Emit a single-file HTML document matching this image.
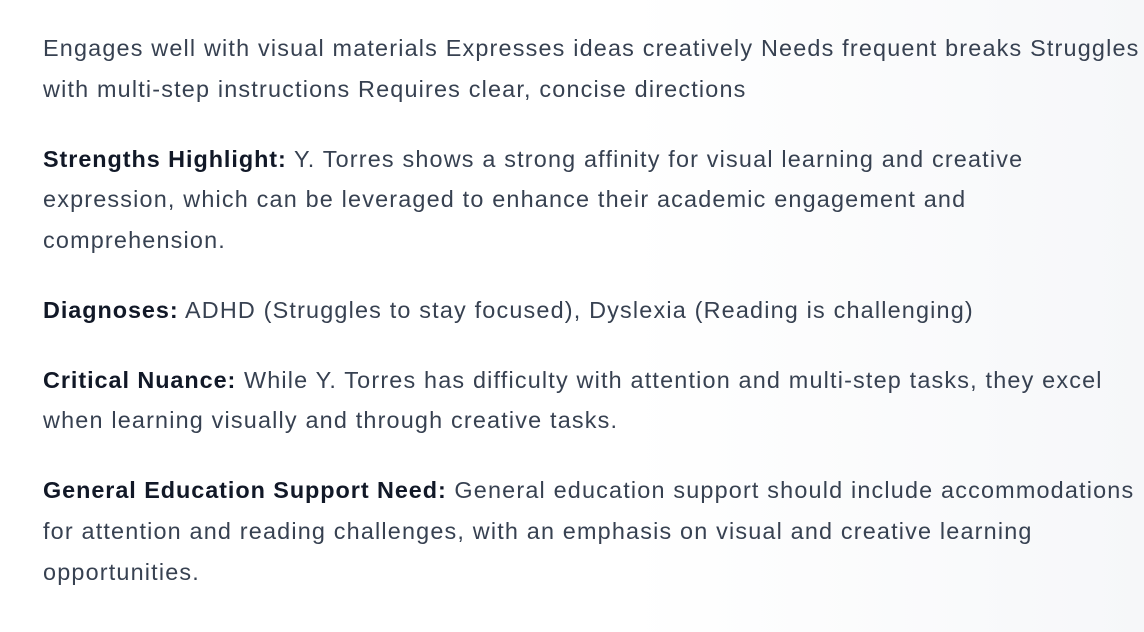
<!DOCTYPE html>
<html><head><meta charset="utf-8"><style>
html,body{margin:0;padding:0;width:1144px;height:632px;overflow:hidden;
background:linear-gradient(90deg,#ffffff 0%,#ffffff 55%,#f6f7f9 100%);}
.c{position:absolute;left:43px;top:28px;font-family:"Liberation Sans",Arial,sans-serif;font-size:23.4px;letter-spacing:1.18px;line-height:40.6px;color:#374151;white-space:nowrap;}
p{margin:0 0 29.4px 0;}
b{color:#111827;font-weight:700;letter-spacing:0.95px;}
</style></head><body>
<div class="c">
<p>Engages well with visual materials Expresses ideas creatively Needs frequent breaks Struggles<br>with multi-step instructions Requires clear, concise directions</p>
<p><b>Strengths Highlight:</b> Y. Torres shows a strong affinity for visual learning and creative<br>expression, which can be leveraged to enhance their academic engagement and<br>comprehension.</p>
<p><b>Diagnoses:</b> ADHD (Struggles to stay focused), Dyslexia (Reading is challenging)</p>
<p><b>Critical Nuance:</b> While Y. Torres has difficulty with attention and multi-step tasks, they excel<br>when learning visually and through creative tasks.</p>
<p><b>General Education Support Need:</b> General education support should include accommodations<br>for attention and reading challenges, with an emphasis on visual and creative learning<br>opportunities.</p>
</div>
</body></html>
